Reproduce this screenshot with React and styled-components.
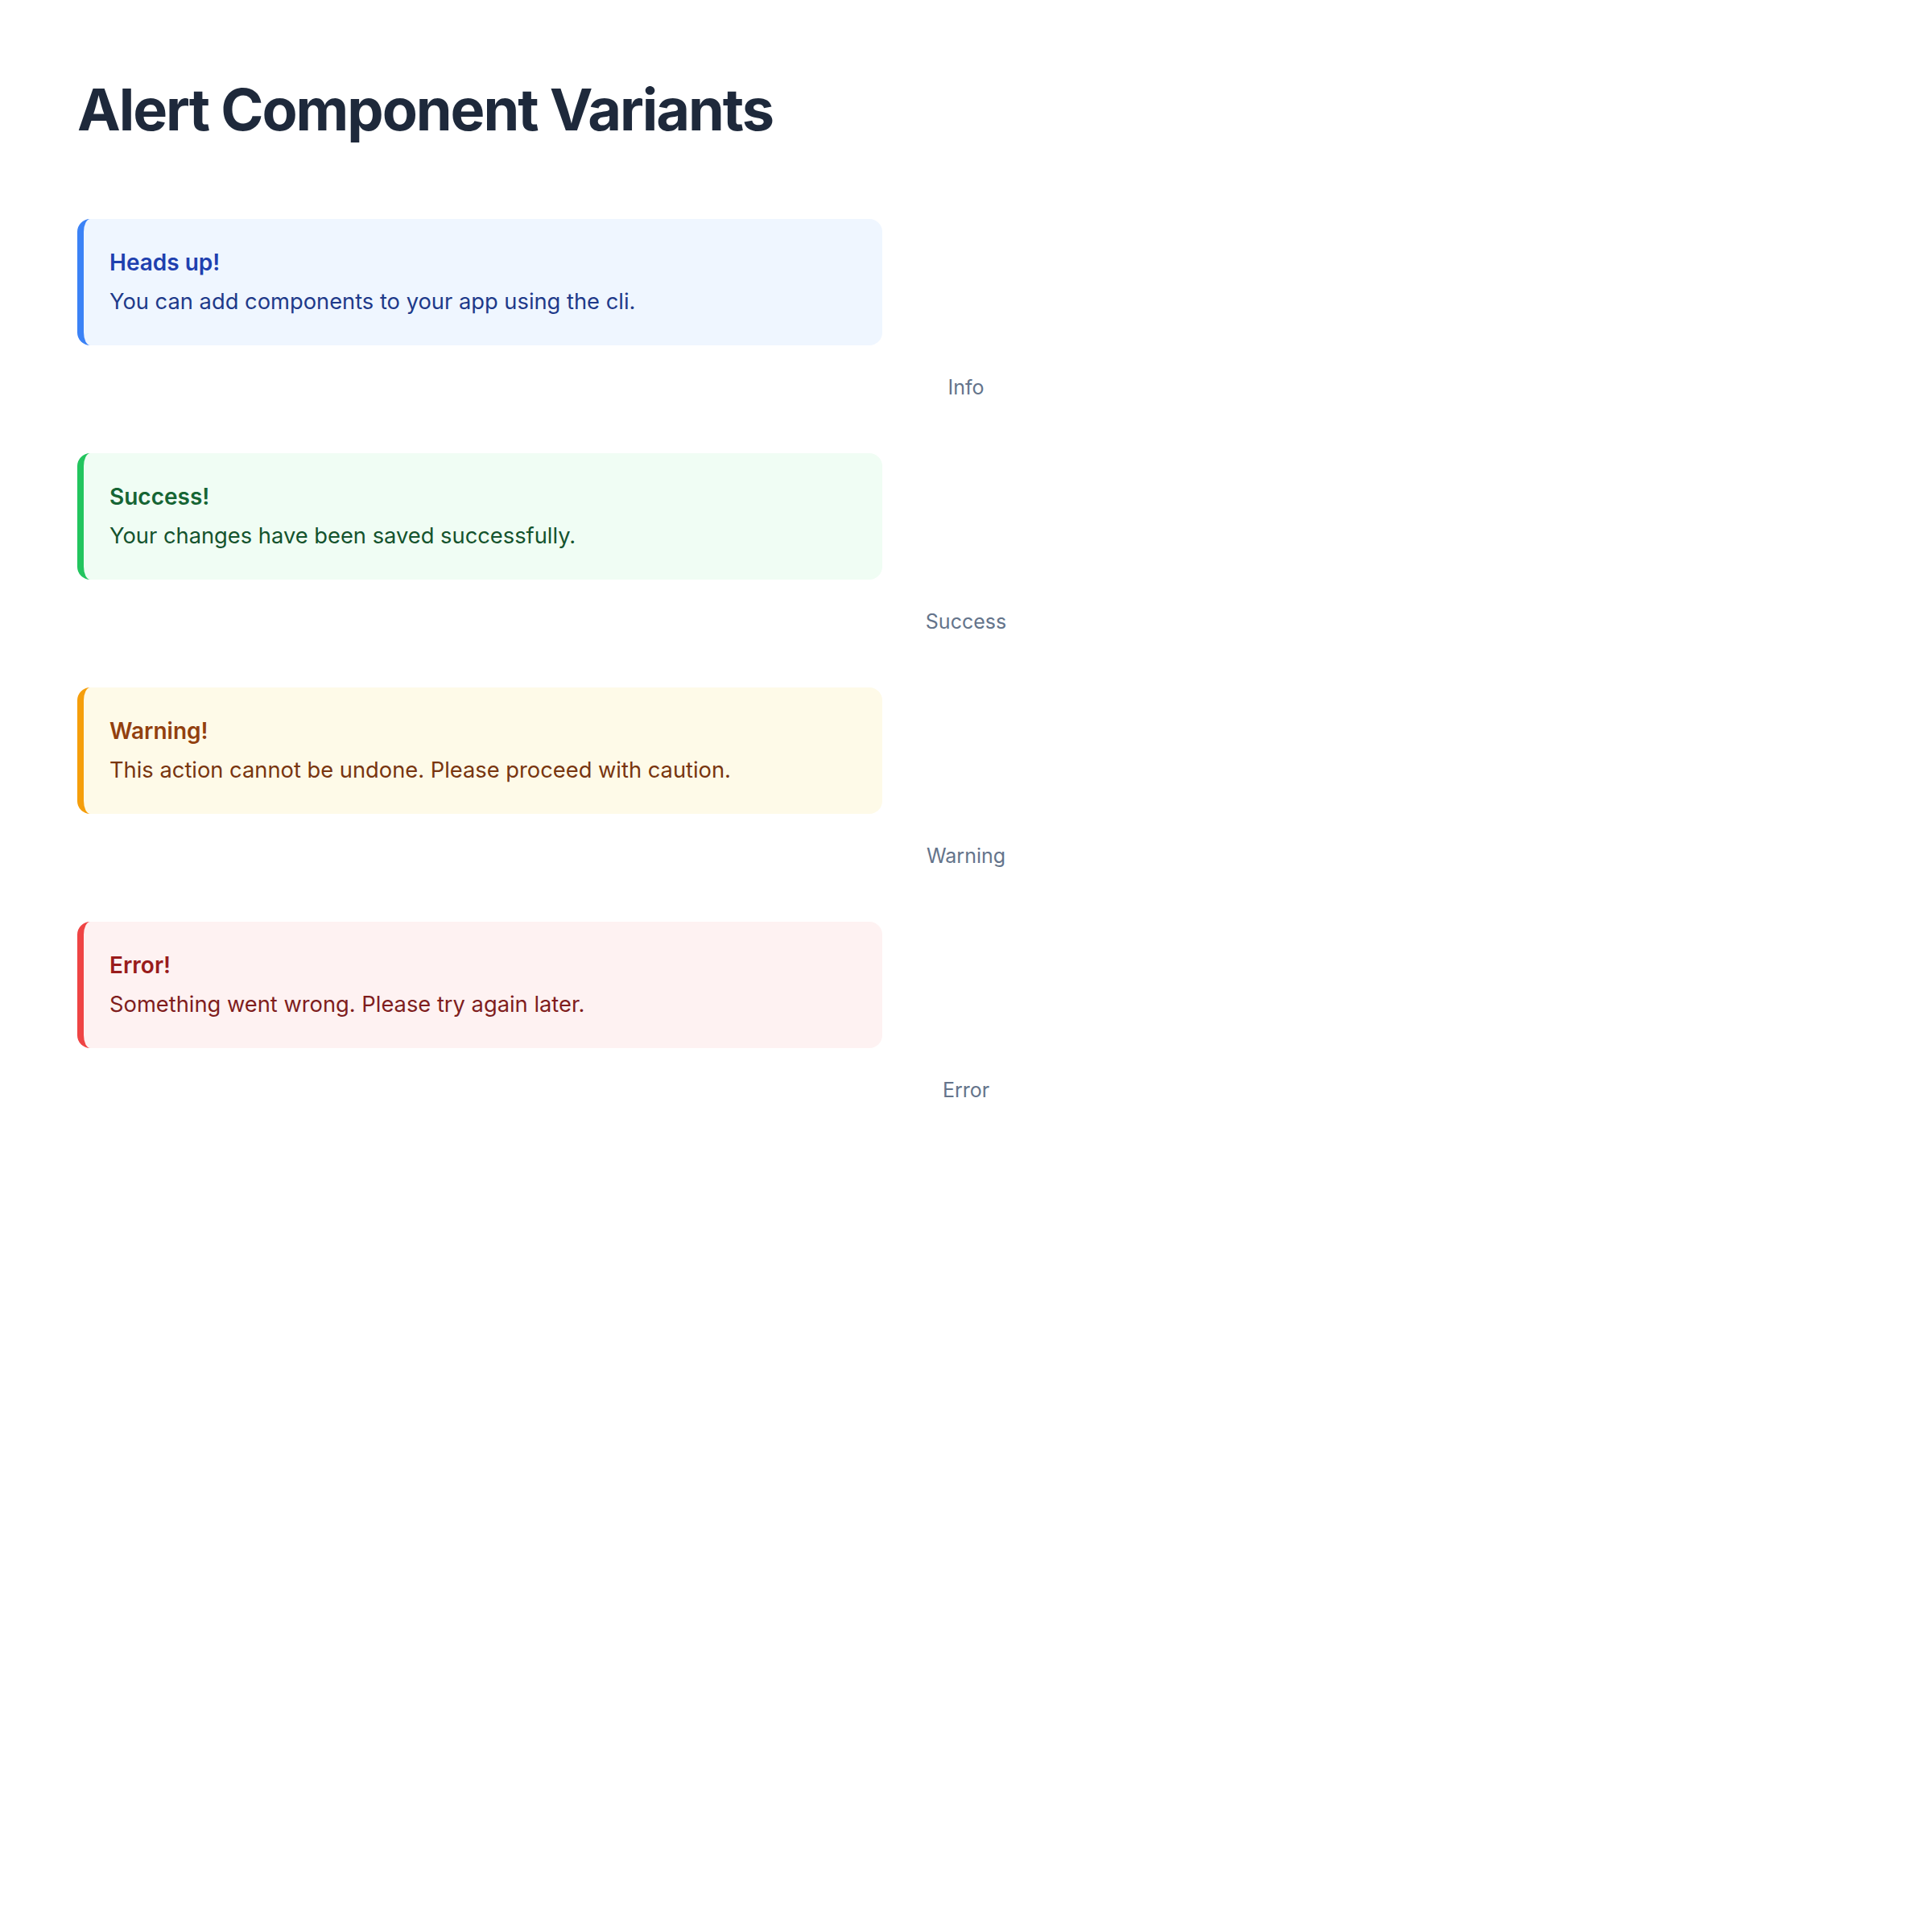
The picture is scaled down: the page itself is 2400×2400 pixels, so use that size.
import React from "react";
import styled, { createGlobalStyle } from "styled-components";

const variants = {
  info: { bg: "#eff6ff", border: "#3b82f6", title: "#1e40af", text: "#1e3a8a" },
  success: { bg: "#f0fdf4", border: "#22c55e", title: "#166534", text: "#14532d" },
  warning: { bg: "#fefae8", border: "#f59e0b", title: "#92400e", text: "#78350f" },
  error: { bg: "#fef2f2", border: "#ef4444", title: "#991b1b", text: "#7f1d1d" },
};

const alerts = [
  { variant: "info", title: "Heads up!", text: "You can add components to your app using the cli.", label: "Info" },
  { variant: "success", title: "Success!", text: "Your changes have been saved successfully.", label: "Success" },
  { variant: "warning", title: "Warning!", text: "This action cannot be undone. Please proceed with caution.", label: "Warning" },
  { variant: "error", title: "Error!", text: "Something went wrong. Please try again later.", label: "Error" },
];

function App() {
  return (
    <>
      <GlobalStyle />
      <Page>
        <Heading>Alert Component Variants</Heading>
        <List>
          {alerts.map((a) => (
            <Item key={a.variant}>
              <Alert $variant={a.variant}>
                <AlertTitle $variant={a.variant}>{a.title}</AlertTitle>
                <AlertText $variant={a.variant}>{a.text}</AlertText>
              </Alert>
              <Label>{a.label}</Label>
            </Item>
          ))}
        </List>
      </Page>
    </>
  );
}

const GlobalStyle = createGlobalStyle`
  body {
    margin: 0;
    background: #ffffff;
    font-family: Inter, "Noto Sans", sans-serif;
  }
`;

const Page = styled.div`
  padding: 93px 96px;
`;

const Heading = styled.h1`
  margin: 0 0 93px;
  font-size: 72px;
  line-height: 1.2;
  font-weight: 700;
  letter-spacing: -0.028em;
  color: #1e293b;
`;

const List = styled.div`
  display: flex;
  flex-direction: column;
  gap: 64px;
`;

const Item = styled.div`
  display: flex;
  flex-direction: column;
`;

const Alert = styled.div`
  width: 1000px;
  box-sizing: border-box;
  padding: 33px 32px;
  border-radius: 16px;
  border-left: 8px solid ${(p) => variants[p.$variant].border};
  background: ${(p) => variants[p.$variant].bg};
  display: flex;
  flex-direction: column;
  gap: 8px;
`;

const AlertTitle = styled.div`
  font-size: 28px;
  line-height: 1.5;
  font-weight: 600;
  color: ${(p) => variants[p.$variant].title};
`;

const AlertText = styled.div`
  font-size: 27.3px;
  line-height: 1.5;
  color: ${(p) => variants[p.$variant].text};
`;

const Label = styled.div`
  margin-top: 34px;
  text-align: center;
  font-size: 25px;
  line-height: 36px;
  color: #64748b;
`;

export default App;
